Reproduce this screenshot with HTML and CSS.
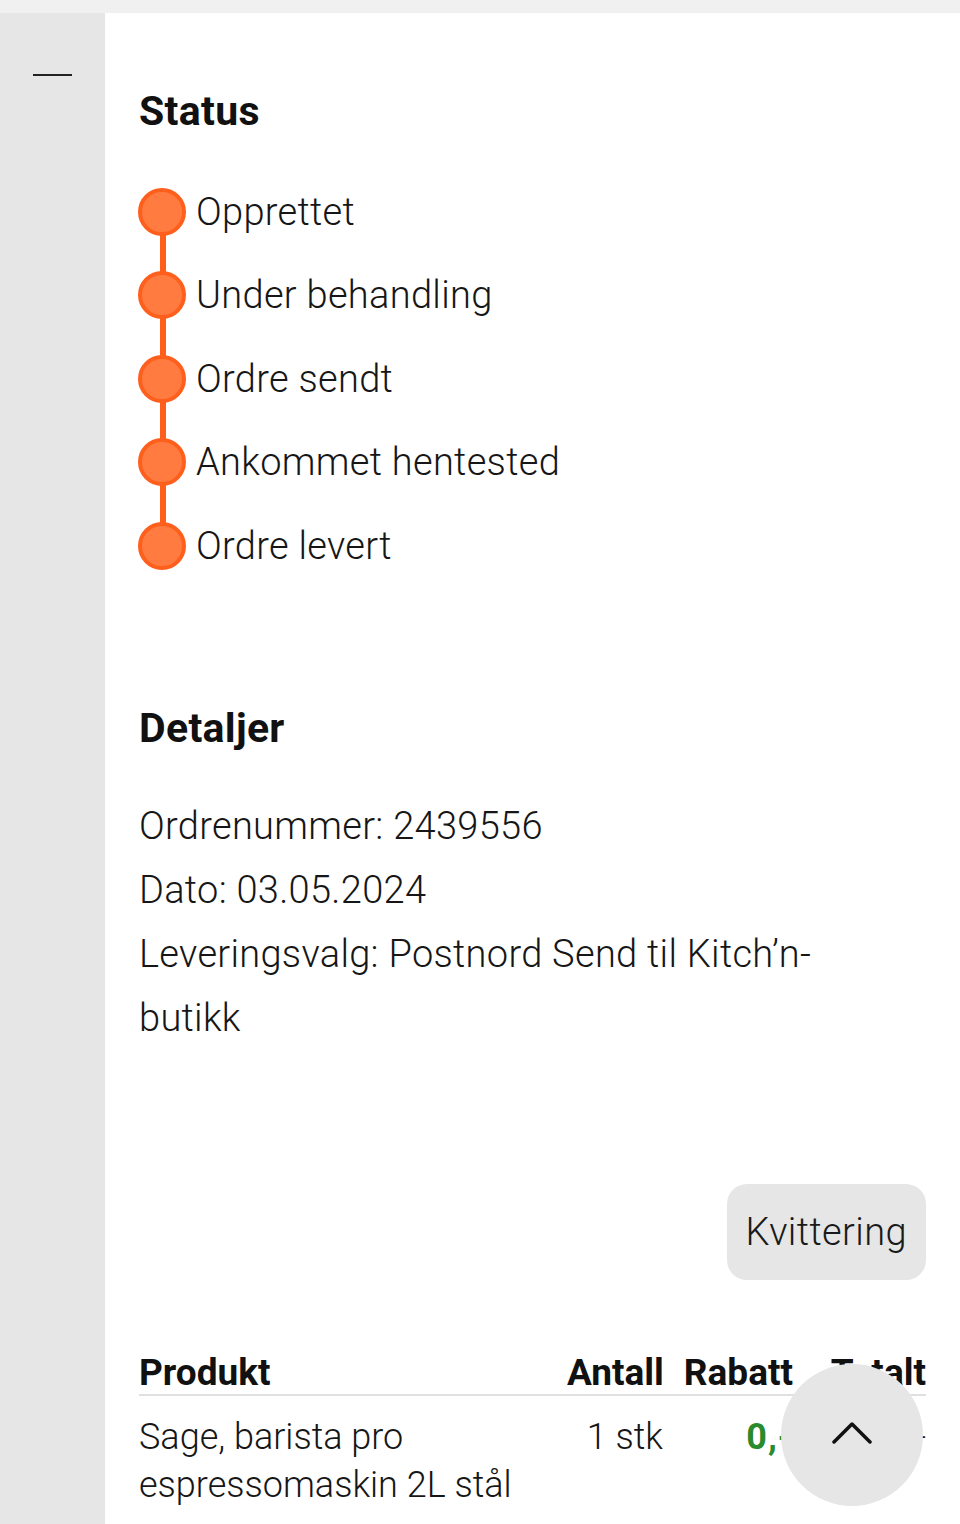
FILE: index.html
```html
<!DOCTYPE html>
<html lang="no">
<head>
<meta charset="utf-8">
<title>Ordre</title>
<link rel="stylesheet" href="styles.css">
</head>
<body>
<div class="topbar"></div>
<div class="layout">
  <aside class="sidebar">
    <span class="collapse-dash"></span>
  </aside>
  <main class="main">
    <section class="status">
      <h2 class="heading">Status</h2>
      <ol class="steps">
        <li class="step"><span class="dot"></span><span class="step-label">Opprettet</span></li>
        <li class="step"><span class="dot"></span><span class="step-label">Under behandling</span></li>
        <li class="step"><span class="dot"></span><span class="step-label">Ordre sendt</span></li>
        <li class="step"><span class="dot"></span><span class="step-label">Ankommet hentested</span></li>
        <li class="step"><span class="dot"></span><span class="step-label">Ordre levert</span></li>
      </ol>
    </section>

    <section class="details">
      <h2 class="heading">Detaljer</h2>
      <div class="detail-lines">
        <p>Ordrenummer: 2439556</p>
        <p>Dato: 03.05.2024</p>
        <p>Leveringsvalg: Postnord Send til Kitch’n-butikk</p>
      </div>
    </section>

    <div class="actions">
      <button class="btn-receipt" type="button">Kvittering</button>
    </div>

    <div class="products">
      <div class="prow prow-head">
        <span class="cell">Produkt</span>
        <span class="cell num">Antall</span>
        <span class="cell num">Rabatt</span>
        <span class="cell num">Totalt</span>
      </div>
      <div class="prow prow-item">
        <span class="cell">Sage, barista pro espressomaskin 2L stål</span>
        <span class="cell num">1 stk</span>
        <span class="cell num discount">0,-</span>
        <span class="cell num">990,-</span>
      </div>
    </div>
  </main>
</div>

<button class="fab" type="button" aria-label="Til toppen">
  <svg width="40" height="24" viewBox="0 0 40 24" fill="none">
    <polyline points="2,22 20,4 38,22" stroke="#111" stroke-width="3.5" stroke-linecap="round" stroke-linejoin="round"/>
  </svg>
</button>
</body>
</html>
```

FILE: styles.css
```css
* { box-sizing: border-box; }

html, body {
  margin: 0;
  padding: 0;
  background: #ffffff;
}

body {
  font-family: Roboto, "Liberation Sans", sans-serif;
  color: #161616;
}

.topbar {
  height: 13px;
  background: #f0f0f0;
}

.layout {
  display: flex;
  min-height: 1511px;
}

.sidebar {
  width: 105px;
  flex: 0 0 105px;
  background: #e6e6e6;
  padding: 61px 0 0 33px;
}

.collapse-dash {
  display: block;
  width: 39px;
  height: 2px;
  background: #222;
}

.main {
  flex: 1;
  padding: 74px 34px 0 34px;
  min-width: 0;
}

.heading {
  margin: 0;
  font-size: 41px;
  line-height: 48px;
  font-weight: 700;
  color: #111;
  letter-spacing: 0.3px;
}

.steps {
  list-style: none;
  margin: 35px 0 0 0;
  padding: 0;
}

.step {
  position: relative;
  display: flex;
  align-items: center;
  height: 83.5px;
}

.step:not(:last-child)::after {
  content: "";
  position: absolute;
  left: 20.5px;
  top: 41.75px;
  width: 6px;
  height: 83.5px;
  background: #ff5f1c;
  z-index: 0;
}

.dot {
  position: relative;
  z-index: 1;
  width: 48px;
  height: 48px;
  flex: 0 0 48px;
  margin-left: -1px;
  border-radius: 50%;
  background: #ff7b40;
  border: 4px solid #ff5f1c;
}

.step-label {
  margin-left: 10px;
  font-size: 38px;
  font-weight: 300;
  letter-spacing: 0.3px;
  color: #161616;
}

.details {
  margin-top: 116px;
}

.detail-lines {
  margin-top: 42px;
  max-width: 720px;
}

.detail-lines p {
  margin: 0;
  font-size: 38px;
  line-height: 64.3px;
  font-weight: 300;
  letter-spacing: 0.3px;
}

.actions {
  display: flex;
  justify-content: flex-end;
  margin-top: 133px;
}

.btn-receipt {
  height: 96px;
  padding: 0 19px;
  border: none;
  border-radius: 20px;
  background: #e6e6e6;
  font-family: Roboto, "Liberation Sans", sans-serif;
  font-size: 38px;
  font-weight: 300;
  letter-spacing: 0.4px;
  color: #1a1a1a;
}

.products {
  margin-top: 71px;
}

.prow {
  display: grid;
  grid-template-columns: 1fr 96px 110px 113px;
  column-gap: 20px;
}

.prow-head {
  font-size: 37px;
  font-weight: 700;
  line-height: 43px;
  color: #111;
  border-bottom: 2px solid #e0e0e0;
}

.prow-item {
  padding-top: 17px;
  font-size: 36px;
  font-weight: 300;
  line-height: 48px;
  color: #161616;
}

.cell {
  min-width: 0;
}

.num {
  text-align: right;
  white-space: nowrap;
}

.discount {
  font-weight: 700;
  color: #2a8a2e;
  letter-spacing: 1px;
}

.fab {
  position: fixed;
  right: 37px;
  bottom: 18px;
  width: 142px;
  height: 142px;
  border-radius: 50%;
  border: none;
  background: #e6e6e6;
  display: flex;
  align-items: center;
  justify-content: center;
  padding: 0 0 6px 0;
}
```
